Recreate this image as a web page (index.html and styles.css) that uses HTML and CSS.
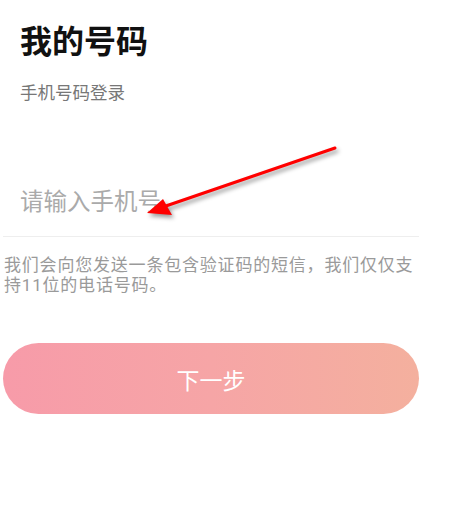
FILE: index.html
```html
<!DOCTYPE html>
<html lang="zh-CN">
<head>
<meta charset="utf-8">
<title>我的号码</title>
<link rel="stylesheet" href="styles.css">
</head>
<body>
<div class="page">
  <h1 class="title">我的号码</h1>
  <p class="subtitle">手机号码登录</p>
  <div class="field">
    <input class="phone" type="tel" placeholder="请输入手机号">
  </div>
  <p class="desc">我们会向您发送一条包含验证码的短信，我们仅仅支持11位的电话号码。</p>
  <button class="next" type="button">下一步</button>
</div>
<svg class="arrow" width="450" height="508" viewBox="0 0 450 508" aria-hidden="true">
  <line x1="335" y1="148" x2="160" y2="208" stroke="#ff0000" stroke-width="3" stroke-linecap="round"/>
  <polygon points="147,213 163,199 172,215" fill="#ff0000"/>
</svg>
</body>
</html>
```
FILE: styles.css
```css
html, body {
  margin: 0;
  padding: 0;
  background: #ffffff;
}
body {
  font-family: "Roboto", "Noto Sans CJK SC", sans-serif;
  width: 450px;
  height: 508px;
  position: relative;
  overflow: hidden;
}
.page {
  width: 416px;
  margin-left: 3px;
  display: flex;
  flex-direction: column;
}
.title {
  margin: 22px 0 0 17px;
  font-size: 32px;
  line-height: 40px;
  font-weight: 700;
  color: #111111;
}
.subtitle {
  margin: 19px 0 0 17px;
  font-size: 17.5px;
  line-height: 24px;
  color: #777777;
}
.field {
  margin-top: 76px;
  border-bottom: 1px solid #eeeeee;
  box-sizing: border-box;
  height: 56px;
}
.phone {
  display: block;
  border: none;
  outline: none;
  background: transparent;
  padding: 0 0 0 17px;
  margin: 0;
  width: 100%;
  box-sizing: border-box;
  height: 41px;
  font-family: "Roboto", "Noto Sans CJK SC", sans-serif;
  font-size: 23.5px;
  color: #333333;
}
.phone::placeholder {
  color: #aaaaaa;
}
.desc {
  margin: 18px 0 0 1px;
  font-size: 17px;
  letter-spacing: 0.8px;
  line-height: 20px;
  color: #9a9a9a;
}
.next {
  margin-top: 48px;
  height: 71px;
  width: 416px;
  border: none;
  border-radius: 36px;
  background: linear-gradient(90deg, #f79ba9 0%, #f6a5a6 50%, #f4b09e 100%);
  color: #ffffff;
  font-family: "Roboto", "Noto Sans CJK SC", sans-serif;
  font-size: 23px;
  padding: 0;
}
.arrow {
  position: absolute;
  left: 0;
  top: 0;
  pointer-events: none;
  filter: drop-shadow(2px 3px 2px rgba(0, 0, 0, 0.4));
}
```
